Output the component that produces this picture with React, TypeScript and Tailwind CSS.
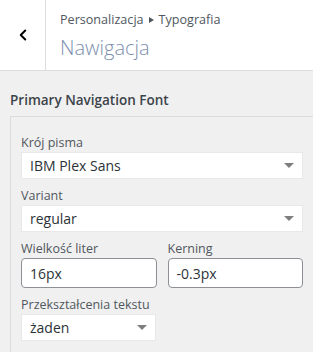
import { ChevronLeft } from 'lucide-react';

const font = { fontFamily: '"Open Sans", "Noto Sans", sans-serif' };

function SelectBox({ value, wide = true }: { value: string; wide?: boolean }) {
  return (
    <div
      className={`flex h-[27px] items-center justify-between border border-[#e8e8e8] bg-white pl-[8px] pr-[8px] text-[14px] text-[#2c3338] ${
        wide ? 'w-full' : 'w-[135px]'
      }`}
    >
      <span>{value}</span>
      <span className="h-0 w-0 border-x-[5px] border-t-[5px] border-x-transparent border-t-[#7e7e7e]" />
    </div>
  );
}

function Field({ label, children }: { label: string; children: React.ReactNode }) {
  return (
    <div>
      <div className="mb-[1px] text-[12.5px] leading-[16px] text-[#50575e]">{label}</div>
      {children}
    </div>
  );
}

function TextInput({ value }: { value: string }) {
  return (
    <div className="flex h-[30px] items-center rounded-[4px] border border-[#8c8f94] bg-white pl-[8px] text-[14px] text-[#2c3338]">
      {value}
    </div>
  );
}

export default function App() {
  return (
    <div className="h-[352px] w-[313px] overflow-hidden bg-[#f0f0f0]" style={font}>
      <header className="flex h-[71px] border-b border-[#dcdcde] bg-white">
        <button
          type="button"
          className="flex w-[46px] shrink-0 items-center justify-center border-r border-[#dcdcde] text-black"
        >
          <ChevronLeft size={18} strokeWidth={2.6} />
        </button>
        <div className="pl-[14px] pt-[11px]">
          <div className="flex items-center gap-[5px] text-[12.6px] leading-[18px] text-[#50575e]">
            <span>Personalizacja</span>
            <span className="h-0 w-0 border-y-[3.5px] border-l-[5px] border-y-transparent border-l-[#50575e]" />
            <span>Typografia</span>
          </div>
          <div className="mt-[6px] text-[20px] font-light leading-[26px] text-[#7d8fae]">Nawigacja</div>
        </div>
      </header>

      <div className="pl-[10px] pt-[19px]">
        <h3 className="text-[13.5px] font-semibold leading-[20px] text-[#3c434a]">
          Primary Navigation Font
        </h3>
        <div className="mt-[6px] border-l border-t border-[#dcdcde] pb-[12px] pl-[10px] pr-[10px] pt-[18px]">
          <div className="flex flex-col gap-[9px]">
            <Field label="Krój pisma">
              <SelectBox value="IBM Plex Sans" />
            </Field>
            <Field label="Variant">
              <SelectBox value="regular" />
            </Field>
            <div className="grid grid-cols-2 gap-[11px]">
              <Field label="Wielkość liter">
                <TextInput value="16px" />
              </Field>
              <Field label="Kerning">
                <TextInput value="-0.3px" />
              </Field>
            </div>
            <Field label="Przekształcenia tekstu">
              <SelectBox value="żaden" wide={false} />
            </Field>
          </div>
        </div>
      </div>
    </div>
  );
}
